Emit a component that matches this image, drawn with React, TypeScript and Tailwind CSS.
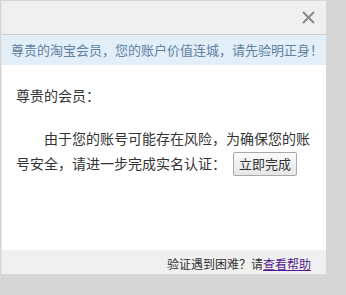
import React from "react";

const CloseIcon = () => (
  <svg width="13" height="13" viewBox="0 0 13 13" className="block">
    <path d="M1 1 L12 12 M12 1 L1 12" stroke="#8a8a8a" strokeWidth="2" />
  </svg>
);

export default function App() {
  return (
    <div
      className="w-[346px] h-[295px] bg-[#d6d6d6] pt-px pl-px"
      style={{ fontFamily: '"Noto Sans CJK SC", "Liberation Sans", sans-serif' }}
    >
      <div className="w-[325px] bg-white border-l border-[#e4e4e4]">
        {/* header */}
        <div className="h-[34px] bg-[#efefef] border-b border-[#cfcfcf] flex items-center justify-end pr-[11px]">
          <button className="p-0">
            <CloseIcon />
          </button>
        </div>

        {/* notice bar */}
        <div className="h-[30px] bg-[#e2eef8] flex items-center pl-[9px] text-[13px] text-[#5f82a0] whitespace-nowrap">
          尊贵的淘宝会员，您的账户价值连城，请先验明正身！
        </div>

        {/* body */}
        <div className="h-[185px] pt-[18px] pl-[14px] pr-[14px] text-[14px] leading-[25px] text-[#333]">
          <p>尊贵的会员：</p>
          <div className="mt-[18px]">
            <p className="indent-[28px]">由于您的账号可能存在风险，为确保您的账</p>
            <div className="flex items-center">
              <span>号安全，请进一步完成实名认证：</span>
              <button className="ml-[7px] flex items-center justify-center w-[64px] h-[24px] rounded-[2px] border border-[#a9a9a9] bg-gradient-to-b from-[#fbfbfb] to-[#e6e6e6] text-[13px] leading-none text-[#333]">
                立即完成
              </button>
            </div>
          </div>
        </div>

        {/* footer */}
        <div className="h-[24px] bg-[#f0f0f0] flex items-center justify-end pr-[15px] pt-[3px] text-[12px] text-[#333]">
          <span>验证遇到困难？请</span>
          <a href="#" className="text-[#551a8b] underline">
            查看帮助
          </a>
        </div>
      </div>
    </div>
  );
}
